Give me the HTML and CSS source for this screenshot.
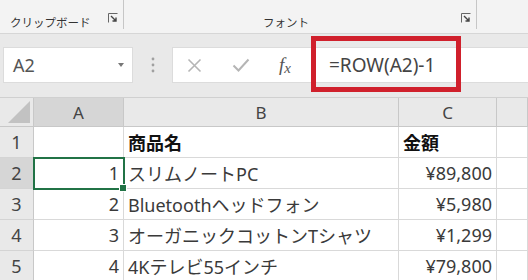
FILE: index.html
```html
<!DOCTYPE html>
<html lang="ja">
<head>
    <meta charset="UTF-8">
    <title>ROW関数</title>
    <link rel="stylesheet" href="styles.css">
</head>
<body>
    <div class="screen">
        <div class="ribbon">
            <div class="group group-clip">
                <span class="group-label">クリップボード</span>
                <span class="launcher"><svg width="10" height="10" viewBox="0 0 10 10"><path d="M0.5 9.5V0.5H9.5" fill="none" stroke="#666" stroke-width="1"/><path d="M3 3L8 8M8 4.5V8H4.5" fill="none" stroke="#444" stroke-width="1.4"/></svg></span>
            </div>
            <div class="group group-font">
                <span class="group-label">フォント</span>
                <span class="launcher"><svg width="10" height="10" viewBox="0 0 10 10"><path d="M0.5 9.5V0.5H9.5" fill="none" stroke="#666" stroke-width="1"/><path d="M3 3L8 8M8 4.5V8H4.5" fill="none" stroke="#444" stroke-width="1.4"/></svg></span>
            </div>
        </div>

        <div class="formula-area">
            <div class="name-box">
                <span>A2</span>
                <span class="caret"></span>
            </div>
            <div class="grip">
                <svg width="4" height="16" viewBox="0 0 4 16"><circle cx="2" cy="2" r="1.4" fill="#a0a0a0"/><circle cx="2" cy="8" r="1.4" fill="#a0a0a0"/><circle cx="2" cy="14" r="1.4" fill="#a0a0a0"/></svg>
            </div>
            <div class="formula-box">
                <span class="fb-icon"><svg width="15" height="15" viewBox="0 0 15 15"><path d="M1.5 1.5L13.5 13.5M13.5 1.5L1.5 13.5" stroke="#b5b5b5" stroke-width="1.6" fill="none"/></svg></span>
                <span class="fb-icon"><svg width="18" height="14" viewBox="0 0 18 14"><path d="M1.5 7.5L6.5 12.5L16.5 1.5" stroke="#b5b5b5" stroke-width="2" fill="none"/></svg></span>
                <span class="fx">f<span class="fx-x">x</span></span>
                <span class="formula">=ROW(A2)-1</span>
            </div>
        </div>

        <div class="sheet">
            <div class="hd corner"><span class="tri"></span></div>
            <div class="hd col sel">A</div>
            <div class="hd col">B</div>
            <div class="hd col">C</div>
            <div class="hd col"></div>

            <div class="hd row">1</div>
            <div class="cell"></div>
            <div class="cell bold">商品名</div>
            <div class="cell bold">金額</div>
            <div class="cell"></div>

            <div class="hd row sel">2</div>
            <div class="cell num active">1<span class="handle"></span></div>
            <div class="cell">スリムノートPC</div>
            <div class="cell num">¥89,800</div>
            <div class="cell"></div>

            <div class="hd row">3</div>
            <div class="cell num">2</div>
            <div class="cell">Bluetoothヘッドフォン</div>
            <div class="cell num">¥5,980</div>
            <div class="cell"></div>

            <div class="hd row">4</div>
            <div class="cell num">3</div>
            <div class="cell">オーガニックコットンTシャツ</div>
            <div class="cell num">¥1,299</div>
            <div class="cell"></div>

            <div class="hd row">5</div>
            <div class="cell num">4</div>
            <div class="cell">4Kテレビ55インチ</div>
            <div class="cell num">¥79,800</div>
            <div class="cell"></div>
        </div>

        <div class="callout"></div>
    </div>
</body>
</html>
```

FILE: styles.css
```css
body {
    margin: 0;
    font-family: "Noto Sans", "Noto Sans CJK JP", sans-serif;
    color: #333;
}
.screen {
    position: relative;
    width: 528px;
    height: 280px;
    overflow: hidden;
    background: #fff;
}
.ribbon {
    display: flex;
    height: 33px;
    background: #f3f3f3;
    border-bottom: 1px solid #d6d6d6;
}
.group {
    display: flex;
    align-items: center;
    height: 29px;
    border-right: 1px solid #c6c6c6;
    box-sizing: border-box;
}
.group-clip {
    width: 124px;
    padding-left: 10px;
}
.group-font {
    width: 353px;
    padding-left: 139px;
}
.group-label {
    font-family: "Noto Sans CJK JP", sans-serif;
    font-size: 11.5px;
    color: #333;
    margin-top: 14px;
}
.launcher {
    margin-left: auto;
    margin-right: 5px;
    margin-top: 6px;
    display: flex;
}
.formula-area {
    display: flex;
    height: 63px;
    padding-top: 13px;
    box-sizing: border-box;
    background: #e9e9e9;
}
.name-box {
    display: flex;
    align-items: center;
    width: 130px;
    height: 36px;
    margin-left: 3px;
    padding: 0 8px 0 9px;
    box-sizing: border-box;
    background: #fff;
    border: 1px solid #dcdcdc;
    font-size: 18px;
    color: #555;
}
.caret {
    margin-left: auto;
    border-left: 3.5px solid transparent;
    border-right: 3.5px solid transparent;
    border-top: 4px solid #777;
}
.grip {
    width: 39px;
    height: 36px;
    display: flex;
    align-items: center;
    justify-content: center;
}
.formula-box {
    flex: 1;
    display: flex;
    align-items: center;
    height: 36px;
    background: #fff;
    border: 1px solid #dcdcdc;
    border-right: none;
    box-sizing: border-box;
}
.fb-icon {
    display: flex;
    margin-left: 14px;
}
.fb-icon + .fb-icon {
    margin-left: 30px;
}
.fx {
    margin-left: 29px;
    font-family: "Liberation Serif", serif;
    font-style: italic;
    font-size: 19px;
    color: #555;
}
.fx-x {
    font-size: 15px;
    position: relative;
    top: 2px;
}
.formula {
    margin-left: 38px;
    font-size: 19px;
    color: #444;
}
.sheet {
    display: grid;
    grid-template-columns: 34px 90px 275px 98px 1fr;
    grid-template-rows: 29px repeat(5, 31px);
    border-top: 1px solid #d0d0d0;
}
.hd {
    display: flex;
    align-items: center;
    justify-content: center;
    background: #e9e9e9;
    border-right: 1px solid #c8c8c8;
    border-bottom: 1px solid #c8c8c8;
    box-sizing: border-box;
    font-size: 17px;
    color: #444;
}
.hd.row {
    font-size: 18px;
    border-bottom-color: #d4d4d4;
}
.hd.sel {
    background: #d6d6d6;
}
.corner {
    position: relative;
}
.tri {
    position: absolute;
    right: 3px;
    bottom: 3px;
    border-left: 22px solid transparent;
    border-bottom: 22px solid #c2c2c2;
}
.cell {
    display: flex;
    align-items: center;
    padding: 0 4px;
    border-right: 1px solid #d9d9d9;
    border-bottom: 1px solid #d9d9d9;
    box-sizing: border-box;
    font-size: 18px;
    color: #3a3a3a;
    white-space: nowrap;
}
.cell.num {
    justify-content: flex-end;
}
.cell.bold {
    font-weight: bold;
    color: #111;
}
.active {
    position: relative;
    outline: 2px solid #217346;
    outline-offset: -1px;
}
.handle {
    position: absolute;
    right: -4px;
    bottom: -4px;
    width: 6px;
    height: 6px;
    background: #217346;
    border: 1px solid #fff;
}
.callout {
    position: absolute;
    left: 311px;
    top: 36px;
    width: 150px;
    height: 56px;
    border: 5px solid #d0202c;
    box-sizing: border-box;
}
```
